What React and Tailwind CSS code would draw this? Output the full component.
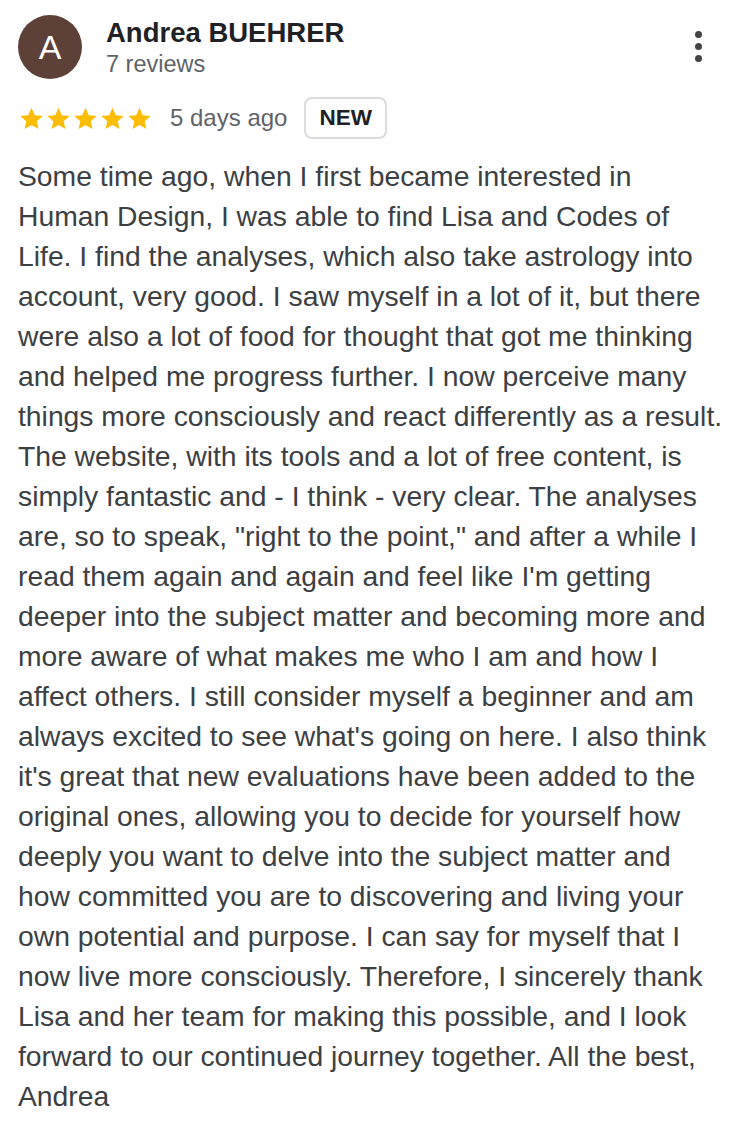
const lines = [
  "Some time ago, when I first became interested in",
  "Human Design, I was able to find Lisa and Codes of",
  "Life. I find the analyses, which also take astrology into",
  "account, very good. I saw myself in a lot of it, but there",
  "were also a lot of food for thought that got me thinking",
  "and helped me progress further. I now perceive many",
  "things more consciously and react differently as a result.",
  "The website, with its tools and a lot of free content, is",
  "simply fantastic and - I think - very clear. The analyses",
  "are, so to speak, \"right to the point,\" and after a while I",
  "read them again and again and feel like I'm getting",
  "deeper into the subject matter and becoming more and",
  "more aware of what makes me who I am and how I",
  "affect others. I still consider myself a beginner and am",
  "always excited to see what's going on here. I also think",
  "it's great that new evaluations have been added to the",
  "original ones, allowing you to decide for yourself how",
  "deeply you want to delve into the subject matter and",
  "how committed you are to discovering and living your",
  "own potential and purpose. I can say for myself that I",
  "now live more consciously. Therefore, I sincerely thank",
  "Lisa and her team for making this possible, and I look",
  "forward to our continued journey together. All the best,",
  "Andrea",
];

export default function App() {
  return (
    <div className="min-h-screen bg-white font-['Liberation_Sans',Arial,sans-serif]">
      <div className="px-[18px] pt-[15px]">
        {/* Header */}
        <div className="flex items-start">
          <div className="w-16 h-16 rounded-full bg-[#5d4037] flex items-center justify-center text-white text-[34px] shrink-0">
            A
          </div>
          <div className="ml-6 flex-1 pt-[1px]">
            <div className="text-[27.5px] font-bold text-[#202124] leading-[33px]">Andrea BUEHRER</div>
            <div className="text-[23.5px] text-[#5f6368] leading-[30px]">7 reviews</div>
          </div>
          <button className="mt-[16px] mr-[16px] flex flex-col gap-[5px] items-center">
            <span className="w-[7px] h-[7px] rounded-full bg-[#444]" />
            <span className="w-[7px] h-[7px] rounded-full bg-[#444]" />
            <span className="w-[7px] h-[7px] rounded-full bg-[#444]" />
          </button>
        </div>

        {/* Rating row */}
        <div className="flex items-center mt-[18px]">
          <div className="flex">
            {[0, 1, 2, 3, 4].map((i) => (
              <svg key={i} width="27" height="27" viewBox="0 0 24 24">
                <path
                  fill="#fbbc04"
                  d="M12 2.5l2.9 6.6 7.1.6-5.4 4.7 1.6 7-6.2-3.7-6.2 3.7 1.6-7L2 9.7l7.1-.6z"
                />
              </svg>
            ))}
          </div>
          <span className="ml-[17px] text-[24px] text-[#5f6368]">5 days ago</span>
          <span className="ml-[17px] border-2 border-[#dadce0] rounded-[8px] px-[13px] h-[42px] flex items-center text-[22.5px] font-bold text-[#202124]">
            NEW
          </span>
        </div>

        {/* Review body */}
        <div className="mt-[17px] text-[28.3px] leading-[40px] text-[#3c4043]">
          {lines.map((l, i) => (
            <div key={i} className="whitespace-nowrap">
              {l}
            </div>
          ))}
        </div>
      </div>
    </div>
  );
}
